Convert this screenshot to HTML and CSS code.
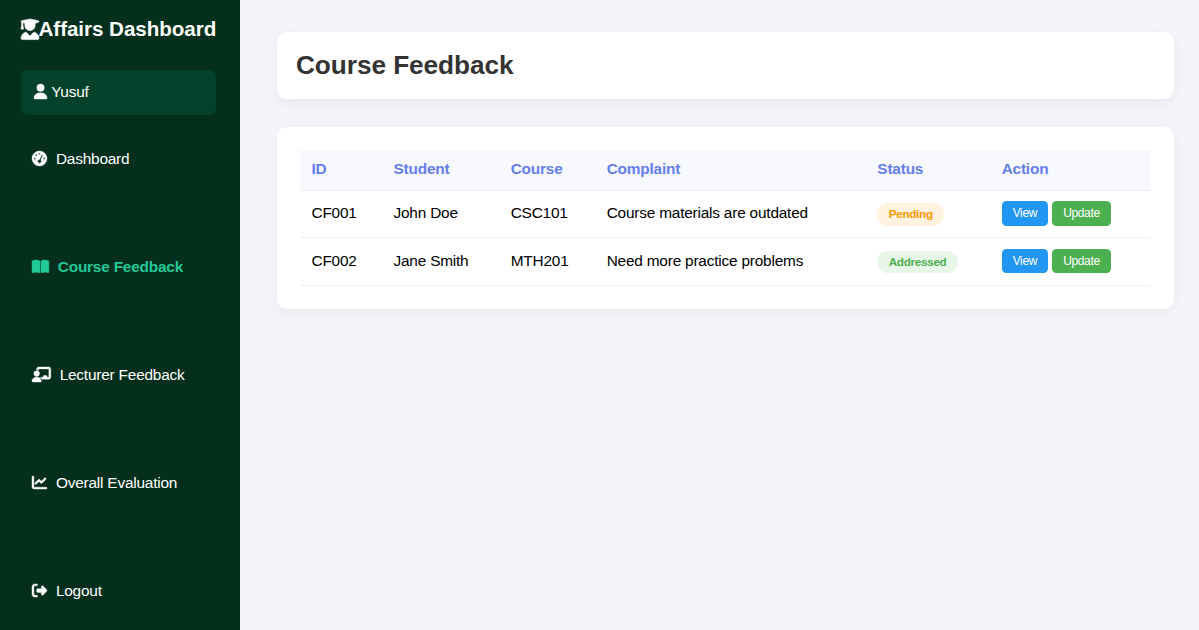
FILE: index.html
```html
<!DOCTYPE html>
<html lang="en">
<head>
    <meta charset="UTF-8">
    <meta name="viewport" content="width=device-width, initial-scale=1.0">
    <title>Course Feedback</title>
    <link rel="stylesheet" href="styles.css">
</head>
<body>
    <aside class="sidebar">
        <h2 class="brand">
            <svg class="icon" viewBox="0 0 448 512"><path d="M219.3 .5c3.1-.6 6.3-.6 9.4 0l200 40C439.9 42.7 448 52.6 448 64s-8.1 21.3-19.3 23.5L352 102.9V160c0 70.7-57.3 128-128 128s-128-57.3-128-128V102.9L48 93.3v65.1l15.7 78.4c.9 4.7-.3 9.6-3.3 13.3s-7.6 5.9-12.4 5.9H16c-4.8 0-9.3-2.1-12.4-5.9s-4.3-8.6-3.3-13.3L16 158.4V86.6C6.5 83.3 0 74.3 0 64C0 52.6 8.1 42.7 19.3 40.5l200-40zM111.9 327.7c10.5-3.4 21.8 .4 29.4 8.5l71 75.5c6.3 6.7 17 6.7 23.3 0l71-75.5c7.6-8.1 18.9-11.9 29.4-8.5C401 348.6 448 409.4 448 481.3c0 17-13.8 30.7-30.7 30.7H30.7C13.8 512 0 498.2 0 481.3c0-71.9 47-132.7 111.9-153.6z"/></svg><span>Affairs Dashboard</span>
        </h2>

        <div class="user-box">
            <svg class="icon" viewBox="0 0 448 512"><path d="M224 256A128 128 0 1 0 224 0a128 128 0 1 0 0 256zm-45.7 48C79.8 304 0 383.8 0 482.3C0 498.7 13.3 512 29.7 512H418.3c16.4 0 29.7-13.3 29.7-29.7C448 383.8 368.2 304 269.7 304H178.3z"/></svg>
            <span>Yusuf</span>
        </div>

        <nav class="menu">
            <a href="#">
                <svg class="icon" viewBox="0 0 512 512"><path d="M0 256a256 256 0 1 1 512 0A256 256 0 1 1 0 256zM288 96a32 32 0 1 0 -64 0 32 32 0 1 0 64 0zM256 416c35.3 0 64-28.7 64-64c0-17.4-6.9-33.1-18.1-44.6L366 161.7c5.3-12.1-.2-26.3-12.3-31.6s-26.3 .2-31.6 12.3L257.9 288c-.6 0-1.3 0-1.9 0c-35.3 0-64 28.7-64 64s28.7 64 64 64zM176 144a32 32 0 1 0 -64 0 32 32 0 1 0 64 0zM96 288a32 32 0 1 0 0-64 32 32 0 1 0 0 64zm352-32a32 32 0 1 0 -64 0 32 32 0 1 0 64 0z"/></svg>
                <span>Dashboard</span>
            </a>
            <a href="#" class="active">
                <svg class="icon" viewBox="0 0 576 512"><path d="M249.6 471.5c10.8 3.8 22.4-4.1 22.4-15.5V78.6c0-4.2-1.6-8.4-5-11C247.4 52 202.4 32 144 32C93.5 32 46.3 45.3 18.1 56.1C6.8 60.5 0 71.7 0 83.8V454.1c0 11.9 12.8 20.2 24.1 16.5C55.6 460.1 105.5 448 144 448c33.9 0 79 14 105.6 23.5zm76.8 0C353 462 398.1 448 432 448c38.5 0 88.4 12.1 119.9 22.6c11.3 3.8 24.1-4.6 24.1-16.5V83.8c0-12.1-6.8-23.3-18.1-27.6C529.7 45.3 482.5 32 432 32c-58.4 0-103.4 20-123 35.6c-3.3 2.6-5 6.8-5 11V456c0 11.4 11.7 19.3 22.4 15.5z"/></svg>
                <span>Course Feedback</span>
            </a>
            <a href="#">
                <svg class="icon" viewBox="0 0 640 512"><path d="M160 64c0-35.3 28.7-64 64-64H576c35.3 0 64 28.7 64 64V352c0 35.3-28.7 64-64 64H336.8c-11.8-25.5-29.9-47.5-52.4-64H384V320c0-17.7 14.3-32 32-32h64c17.7 0 32 14.3 32 32v32h64V64L224 64v49.1C205.2 102.2 183.3 96 160 96V64zm0 64a96 96 0 1 1 0 192 96 96 0 1 1 0-192zM133.3 352h53.3C260.3 352 320 411.7 320 485.3c0 14.7-11.9 26.7-26.7 26.7H26.7C11.9 512 0 500.1 0 485.3C0 411.7 59.7 352 133.3 352z"/></svg>
                <span>Lecturer Feedback</span>
            </a>
            <a href="#">
                <svg class="icon" viewBox="0 0 512 512"><path d="M64 64c0-17.7-14.3-32-32-32S0 46.3 0 64V400c0 44.2 35.8 80 80 80H480c17.7 0 32-14.3 32-32s-14.3-32-32-32H80c-8.8 0-16-7.2-16-16V64zm406.6 86.6c12.5-12.5 12.5-32.8 0-45.3s-32.8-12.5-45.3 0L320 210.7l-57.4-57.4c-12.5-12.5-32.8-12.5-45.3 0l-112 112c-12.5 12.5-12.5 32.8 0 45.3s32.8 12.5 45.3 0L240 221.3l57.4 57.4c12.5 12.5 32.8 12.5 45.3 0l128-128z"/></svg>
                <span>Overall Evaluation</span>
            </a>
            <a href="#">
                <svg class="icon" viewBox="0 0 512 512"><path d="M377.9 105.9L500.7 228.7c7.2 7.2 11.3 17.1 11.3 27.3s-4.1 20.1-11.3 27.3L377.9 406.1c-6.4 6.4-15 9.9-24 9.9c-18.7 0-33.9-15.2-33.9-33.9l0-62.1-128 0c-17.7 0-32-14.3-32-32l0-64c0-17.7 14.3-32 32-32l128 0 0-62.1c0-18.7 15.2-33.9 33.9-33.9c9 0 17.6 3.6 24 9.9zM160 96L96 96c-17.7 0-32 14.3-32 32l0 256c0 17.7 14.3 32 32 32l64 0c17.7 0 32 14.3 32 32s-14.3 32-32 32l-64 0c-53 0-96-43-96-96L0 128C0 75 43 32 96 32l64 0c17.7 0 32 14.3 32 32s-14.3 32-32 32z"/></svg>
                <span>Logout</span>
            </a>
        </nav>
    </aside>

    <main class="main-content">
        <header class="header">
            <h1>Course Feedback</h1>
        </header>

        <section class="card">
            <table>
                <thead>
                    <tr>
                        <th class="col-id">ID</th>
                        <th class="col-student">Student</th>
                        <th class="col-course">Course</th>
                        <th class="col-complaint">Complaint</th>
                        <th class="col-status">Status</th>
                        <th>Action</th>
                    </tr>
                </thead>
                <tbody>
                    <tr>
                        <td>CF001</td>
                        <td>John Doe</td>
                        <td>CSC101</td>
                        <td>Course materials are outdated</td>
                        <td><span class="status pending">Pending</span></td>
                        <td>
                            <button class="btn btn-view">View</button>
                            <button class="btn btn-update">Update</button>
                        </td>
                    </tr>
                    <tr>
                        <td>CF002</td>
                        <td>Jane Smith</td>
                        <td>MTH201</td>
                        <td>Need more practice problems</td>
                        <td><span class="status addressed">Addressed</span></td>
                        <td>
                            <button class="btn btn-view">View</button>
                            <button class="btn btn-update">Update</button>
                        </td>
                    </tr>
                </tbody>
            </table>
        </section>
    </main>
</body>
</html>
```
FILE: styles.css
```css
* {
    margin: 0;
    padding: 0;
    box-sizing: border-box;
}

body {
    display: flex;
    height: 100vh;
    overflow: hidden;
    background: #f4f5fa;
    font-family: "Liberation Sans", Arial, sans-serif;
    font-size: 15.4px;
    letter-spacing: -0.2px;
    color: #000;
}

.icon {
    height: 15px;
    flex-shrink: 0;
    overflow: visible;
    fill: currentColor;
    stroke: currentColor;
    stroke-width: 14;
}

/* Sidebar */
.sidebar {
    display: flex;
    flex-direction: column;
    flex-shrink: 0;
    width: 240px;
    padding: 17px 24px 19px 20.5px;
    background: #042f1c;
    color: #fff;
}

.brand {
    display: flex;
    align-items: center;
    height: 24px;
    margin-bottom: 29px;
    font-size: 20.6px;
    letter-spacing: -0.05px;
    white-space: nowrap;
}

.brand .icon {
    height: 20.6px;
}

.user-box {
    display: flex;
    align-items: center;
    gap: 4px;
    height: 44.5px;
    margin-bottom: 24px;
    padding: 0 13.5px 1px;
    background: #04412a;
    border-radius: 7.5px;
}

.menu {
    display: flex;
    flex: 1;
    flex-direction: column;
    justify-content: space-between;
}

.menu a {
    display: flex;
    align-items: center;
    gap: 9.4px;
    padding: 11px 11px 12px;
    color: #fff;
    line-height: 17px;
    text-decoration: none;
}

.menu a.active {
    color: #20c997;
    font-weight: bold;
}

/* Content */
.main-content {
    flex: 1;
    padding: 32px 25px 32px 37px;
}

.header,
.card {
    background: #fff;
    border-radius: 9.4px;
    box-shadow: 0 4px 14px rgba(0, 0, 0, 0.05);
}

.header {
    display: flex;
    align-items: center;
    height: 67px;
    margin-bottom: 28px;
    padding: 0 19px;
}

.header h1 {
    color: #333;
    font-size: 26.2px;
    letter-spacing: -0.05px;
}

.card {
    height: 182px;
    padding: 23px 23px 23px 23.4px;
}

table {
    width: 100%;
    border-collapse: collapse;
    table-layout: fixed;
}

th,
td {
    padding: 0 11.1px;
    border-bottom: 1px solid #eee;
    text-align: left;
}

th {
    height: 40px;
    padding-bottom: 1px;
    background: #f8f9ff;
    color: #667eea;
}

td {
    height: 47.5px;
    padding-bottom: 1px;
}

.col-id {
    width: 82px;
}

.col-student {
    width: 117.2px;
}

.col-course {
    width: 96px;
}

.col-complaint {
    width: 270.7px;
}

.col-status {
    width: 124.3px;
}

.status {
    display: inline-block;
    margin-top: 2px;
    padding: 5px 11.3px 4.5px;
    border-radius: 19px;
    font-size: 11.8px;
    font-weight: bold;
    letter-spacing: -0.35px;
    line-height: 13px;
    vertical-align: middle;
}

.pending {
    background: #fff3e0;
    color: #ff9800;
}

.addressed {
    background: #e8f5e9;
    color: #4caf50;
}

.btn {
    height: 24.5px;
    padding: 0 11px;
    border: none;
    border-radius: 4.5px;
    color: #fff;
    font-family: inherit;
    font-size: 12px;
    letter-spacing: -0.35px;
    cursor: pointer;
}

.btn-view {
    background: #2196f3;
}

.btn-update {
    background: #4caf50;
}
```
